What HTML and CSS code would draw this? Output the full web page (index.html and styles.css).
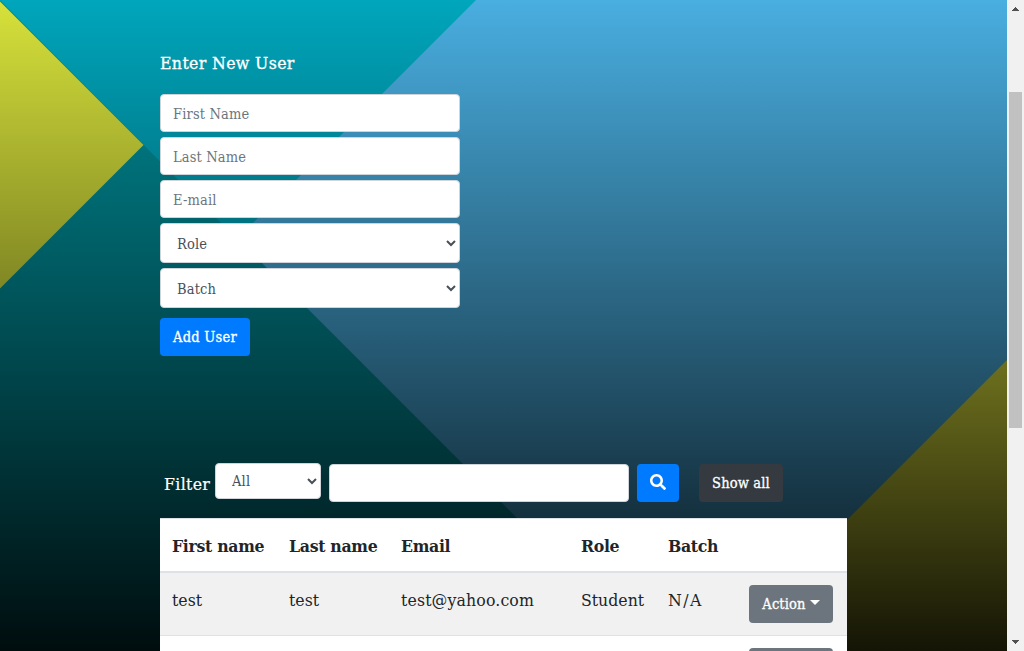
FILE: index.html
```
<!DOCTYPE html>
<html lang="en">
<head>
<meta charset="utf-8">
<title>Users</title>
<link rel="stylesheet" href="styles.css">
</head>
<body>
<div class="window">
  <main class="page">
    <svg class="backdrop" viewBox="0 0 1007 651" preserveAspectRatio="none" aria-hidden="true">
      <defs>
        <linearGradient id="shade" x1="0" y1="0" x2="0" y2="1">
          <stop offset="0" stop-color="#000" stop-opacity="0"/>
          <stop offset="1" stop-color="#000" stop-opacity=".91"/>
        </linearGradient>
      </defs>
      <rect width="1007" height="651" fill="#00909b"/>
      <path d="M0 0H478L238 240Z" fill="#00a6bc"/>
      <path d="M476 0H1007V651H650L238 239L237 239Z" fill="#49aee0"/>
      <path d="M0 1.500L143.500 145L0 288.500Z" fill="#d7e23b"/>
      <path d="M1007 360V651H716Z" fill="#dde23b"/>
      <rect width="1007" height="651" fill="url(#shade)"/>
    </svg>
    <div class="content">
      <h1 class="title"><span>Enter New User</span></h1>
      <form class="user-form">
        <input class="field" type="text" placeholder="First Name">
        <input class="field" type="text" placeholder="Last Name">
        <input class="field" type="text" placeholder="E-mail">
        <select class="field field-tall"><option>Role</option></select>
        <select class="field field-tall"><option>Batch</option></select>
        <button class="btn btn-primary btn-add" type="button"><span>Add User</span></button>
      </form>
      <div class="filter">
        <label class="filter-label" for="kind">Filter</label>
        <select class="field filter-kind" id="kind"><option>All</option></select>
        <input class="field filter-text" type="text" aria-label="Search">
        <button class="btn btn-primary btn-search" type="button" aria-label="Search">
          <svg width="16" height="16" viewBox="0 0 512 512" fill="currentColor"><path d="M505 442.700L405.300 343c-4.500-4.500-10.600-7-17-7H372c27.600-35.300 44-79.700 44-128C416 93.100 322.900 0 208 0S0 93.100 0 208s93.100 208 208 208c48.300 0 92.700-16.400 128-44v16.300c0 6.400 2.500 12.500 7 17l99.700 99.700c9.400 9.400 24.600 9.400 33.900 0l28.300-28.300c9.400-9.400 9.400-24.600.1-34zM208 336c-70.700 0-128-57.200-128-128 0-70.700 57.200-128 128-128 70.700 0 128 57.200 128 128 0 70.700-57.200 128-128 128z"/></svg>
        </button>
        <button class="btn btn-dark" type="button"><span>Show all</span></button>
      </div>
      <table class="users">
        <colgroup><col class="c-first"><col class="c-last"><col class="c-email"><col class="c-role"><col class="c-batch"><col></colgroup>
        <thead>
          <tr><th>First name</th><th>Last name</th><th>Email</th><th>Role</th><th>Batch</th><th></th></tr>
        </thead>
        <tbody>
          <tr class="striped"><td>test</td><td>test</td><td class="email">test@yahoo.com</td><td>Student</td><td class="batch">N/A</td><td><button class="btn btn-secondary" type="button"><span>Action</span><i class="caret"></i></button></td></tr>
          <tr><td></td><td></td><td></td><td></td><td></td><td><button class="btn btn-secondary" type="button" aria-label="Action"></button></td></tr>
        </tbody>
      </table>
    </div>
  </main>
  <div class="scrollbar">
    <svg class="arrow" width="7" height="4" viewBox="0 0 7 4" shape-rendering="crispEdges"><path d="M3 0h1v1h1v1h1v1h1v1H0V3h1V2h1V1h1z"/></svg>
    <div class="thumb"></div>
    <svg class="arrow arrow-down" width="7" height="4" viewBox="0 0 7 4" shape-rendering="crispEdges"><path d="M0 0h7v1H6v1H5v1H4v1H3V3H2V2H1V1H0z"/></svg>
  </div>
</div>
</body>
</html>
```
FILE: styles.css
```
* { box-sizing: border-box; }
body { margin: 0; overflow: hidden; }
body, input, select, button {
  font-family: "DejaVu Serif Condensed", "DejaVu Serif", serif;
  font-stretch: condensed;
}
.window { display: flex; width: 1024px; height: 651px; overflow: hidden; }
.page { position: relative; flex: 1; height: 651px; overflow: hidden; }
.backdrop { position: absolute; inset: 0; width: 100%; height: 100%; }
.content { position: relative; width: 687px; margin-left: 160px; padding-top: 51px; }
.title {
  margin: 0 0 19px; font-size: 17.5px; line-height: 24px; font-weight: 400;
  letter-spacing: .37px; color: #fff; -webkit-text-stroke: .3px #fff;
}
.user-form { display: flex; flex-direction: column; align-items: flex-start; gap: 5px; }
.field {
  width: 300px; height: 38px; padding: 8px 12px 6px;
  font-size: 14.5px; line-height: 22px; letter-spacing: .15px; color: #495057;
  background-color: #fff; border: 1px solid #ced4da; border-radius: 4px;
}
.field::placeholder { color: #6c757d; opacity: 1; }
.field-tall { height: 40px; padding-top: 8px; }
.btn {
  display: flex; align-items: center; justify-content: center;
  height: 38px; padding: 0; border: 0; border-radius: 4px;
  font-size: 14.5px; letter-spacing: .15px; color: #fff; white-space: nowrap;
  -webkit-text-stroke: .3px #fff;
}
.btn-primary { background: #007bff; }
.btn-add { width: 90px; margin-top: 5px; letter-spacing: .25px; }
.filter { display: flex; align-items: flex-start; height: 55px; margin-top: 107px; padding-left: 4px; }
.filter-label {
  width: 51px; padding-top: 9px; font-size: 17.5px; line-height: 24px;
  letter-spacing: .35px; color: #fff; -webkit-text-stroke: .2px #fff;
}
.filter-kind { width: 106px; height: 36px; padding-top: 6px; }
.filter-text { margin: 1px 0 0 8px; }
.btn-search { width: 42px; margin: 1px 0 0 8px; }
.btn-search svg { margin-top: -2px; }
.btn-dark { width: 84px; margin: 1px 0 0 20px; background: #343a40; }
.users {
  width: 687px; table-layout: fixed; border-collapse: collapse;
  background: #fff; color: #212529; font-size: 17.5px; line-height: 28px;
}
.c-first { width: 117px; }
.c-last { width: 112px; }
.c-email { width: 180px; }
.c-role { width: 87px; }
.c-batch { width: 81px; }
.users th, .users td { padding: 13px 12px 11px; border-top: 1px solid #dee2e6; text-align: left; vertical-align: top; white-space: nowrap; }
.users td:last-child { padding: 12px; }
.users th { border-bottom: 2px solid #dee2e6; font-weight: 700; letter-spacing: -.32px; }
.users .email { letter-spacing: .14px; }
.users .batch { letter-spacing: 1.4px; }
.striped { background: #f1f1f1; }
.btn-secondary { width: 84px; background: #6c757d; }
.caret { margin-left: 4px; margin-bottom: 4px; border-top: 5px solid #fff; border-left: 5px solid transparent; border-right: 5px solid transparent; }
.scrollbar { display: flex; flex-direction: column; align-items: center; width: 17px; height: 651px; padding: 7px 0; background: #f1f1f1; }
.arrow { display: block; fill: #505050; }
.thumb { width: 13px; height: 336px; margin-top: 81px; background: #c1c1c1; }
.arrow-down { margin-top: auto; }
```
